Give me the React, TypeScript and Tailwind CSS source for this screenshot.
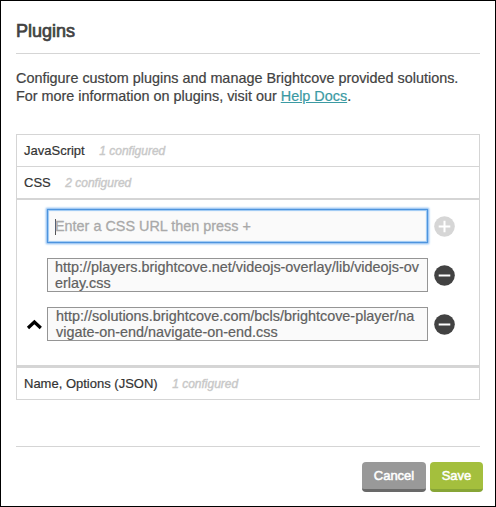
import React from 'react';

type UrlRowProps = { lines: [string, string]; movable?: boolean; className?: string };

function Minus() {
  return (
    <svg className="h-[21px] w-[21px] shrink-0" viewBox="0 0 21 21" aria-label="Remove">
      <circle cx="10.5" cy="10.5" r="10.3" fill="#424242" />
      <path d="M4.7 10.5H16.3" stroke="#fff" strokeWidth="2" />
    </svg>
  );
}

function UrlRow({ lines, movable, className = '' }: UrlRowProps) {
  return (
    <div className={`flex h-[34px] items-center ${className}`}>
      <div className="flex w-[30px] shrink-0 items-center pl-[9px]">
        {movable && (
          <svg className="h-[11px] w-[17px] shrink-0" viewBox="0 0 17 11" aria-label="Move up">
            <path d="M2 9L8.4 3L14.8 9" fill="none" stroke="#000" strokeWidth="3.2" />
          </svg>
        )}
      </div>
      <div className="h-[34px] w-[381px] shrink-0 border border-[#959595] bg-[#fafafa] pl-[7px] text-[14.4px] leading-4 whitespace-nowrap text-[#606060] [-webkit-text-stroke:0.2px_#606060]">
        <div className={movable ? 'pl-px' : ''}>{lines[0]}</div>
        <div className={movable ? 'pl-px' : ''}>{lines[1]}</div>
      </div>
      <div className="ml-[6px] flex">
        <Minus />
      </div>
    </div>
  );
}

function SectionHeader({ title, count, className = '' }: { title: string; count: string; className?: string }) {
  return (
    <div className={`flex items-center pl-[7px] text-[13px] ${className}`}>
      <span className="text-[#333] [-webkit-text-stroke:0.2px_#333]">{title}</span>
      <span className="ml-[14.5px] text-[12px] text-[#c8c8c8] italic [-webkit-text-stroke:0.4px_#c8c8c8]">{count}</span>
    </div>
  );
}

export default function App() {
  return (
    <main className="flex h-[507px] w-[496px] flex-col border border-black bg-white px-[15px] font-['Liberation_Sans',Arial,sans-serif] text-[#424242]">
      <h1 className="mt-[19px] h-[34px] border-b border-[#d5d5d5] text-[18px] leading-[22px] font-normal [-webkit-text-stroke:0.7px_#424242]">
        Plugins
      </h1>
      <p className="mt-[15px] text-[14.4px] leading-[18px] whitespace-nowrap [-webkit-text-stroke:0.2px]">
        <span className="block">Configure custom plugins and manage Brightcove provided solutions.</span>
        <span className="block">
          For more information on plugins, visit our <a className="text-[#3b9aa3] underline">Help Docs</a>.
        </span>
      </p>
      <section className="mt-[29px] h-[266px] shrink-0 border border-[#d5d5d5]">
        <SectionHeader title="JavaScript" count="1 configured" className="h-8 border-b border-[#d5d5d5]" />
        <SectionHeader title="CSS" count="2 configured" className="h-[33px] border-b-2 border-[#d5d5d5]" />
        <div className="h-[168px] border-b-[3px] border-[#d5d5d5] pt-[9px]">
          <div className="flex h-[34px] items-center">
            <div className="ml-[30px] flex h-[34px] w-[381px] items-center border border-[#4d94de] bg-[#fafafa] pt-px pl-[7px] shadow-[0_0_2px_1px_#79b2ee,inset_0_0_1px_1px_#9ac7f3]">
              <span className="h-[16px] w-px bg-[#555]" />
              <span className="-ml-px pt-px text-[14.4px] text-[#a9a9a9] [-webkit-text-stroke:0.3px_#a9a9a9]">Enter a CSS URL then press +</span>
            </div>
            <svg className="ml-[6px] h-[21px] w-[21px]" viewBox="0 0 21 21" aria-label="Add">
              <circle cx="10.5" cy="10.5" r="10.3" fill="#d6d6d6" />
              <path d="M4.7 10.5H16.3M10.5 4.7V16.3" stroke="#fff" strokeWidth="2" />
            </svg>
          </div>
          <UrlRow className="mt-[15px]" lines={['http://players.brightcove.net/videojs-overlay/lib/videojs-ov', 'erlay.css']} />
          <UrlRow movable className="mt-[15px]" lines={['http://solutions.brightcove.com/bcls/brightcove-player/na', 'vigate-on-end/navigate-on-end.css']} />
        </div>
        <SectionHeader title="Name, Options (JSON)" count="1 configured" className="h-[31px]" />
      </section>
      <footer className="mt-[46px] -mr-[3px] flex shrink-0 flex-col">
        <div className="mr-[3px] h-px bg-[#d5d5d5]" />
        <div className="mt-[15px] flex justify-end gap-1 text-[13px] font-normal text-white [-webkit-text-stroke:0.5px_#fff]">
          <button className="h-[30px] w-16 rounded-[4px] border-b-[3px] border-[#696969] bg-[#999]">Cancel</button>
          <button className="h-[30px] w-[53px] rounded-[4px] border-b-[3px] border-[#87a536] bg-[#a4bf3d]">Save</button>
        </div>
      </footer>
    </main>
  );
}
